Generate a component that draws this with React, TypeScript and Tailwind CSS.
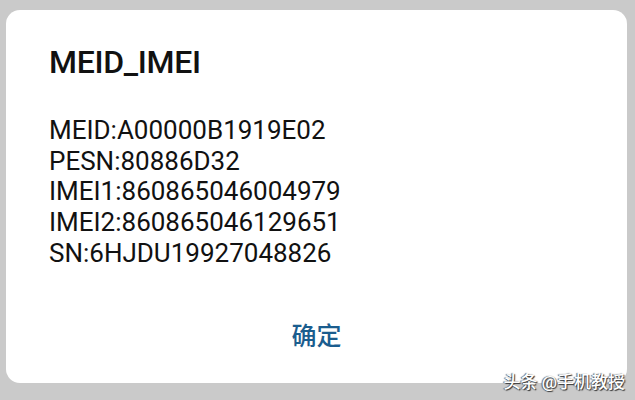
import React from 'react'

const lines = [
  'MEID:A00000B1919E02',
  'PESN:80886D32',
  'IMEI1:860865046004979',
  'IMEI2:860865046129651',
  'SN:6HJDU19927048826',
]

export default function App() {
  return (
    <div
      className="relative h-[400px] w-[635px] overflow-hidden bg-[#cacaca] pl-[6px] pt-[10px]"
      style={{ fontFamily: 'Roboto, "Noto Sans CJK SC", sans-serif' }}
    >
      <div className="flex h-[373px] w-[621px] flex-col rounded-[14px] bg-white pl-[43px]">
        <h1 className="mt-[32px] text-[32px] font-medium leading-[40px] tracking-[-0.3px] text-[#111]">
          MEID_IMEI
        </h1>
        <div className="mt-[33px] flex flex-col text-[26px] leading-[30.7px] text-[#111]">
          {lines.map((l) => (
            <div key={l}>{l}</div>
          ))}
        </div>
        <div className="mt-[52px] flex justify-center pr-[43px]">
          <button className="text-[25px] font-medium leading-[32px] text-[#1b5d8e]">确定</button>
        </div>
      </div>
      {/* watermark over the card */}
      <div
        className="absolute bottom-[8px] right-[10px] text-[17px] font-medium leading-[20px] text-white"
        style={{ textShadow: '1px 1px 1px #333, -1px 0 1px #555' }}
      >
        头条 @手机教授
      </div>
    </div>
  )
}
